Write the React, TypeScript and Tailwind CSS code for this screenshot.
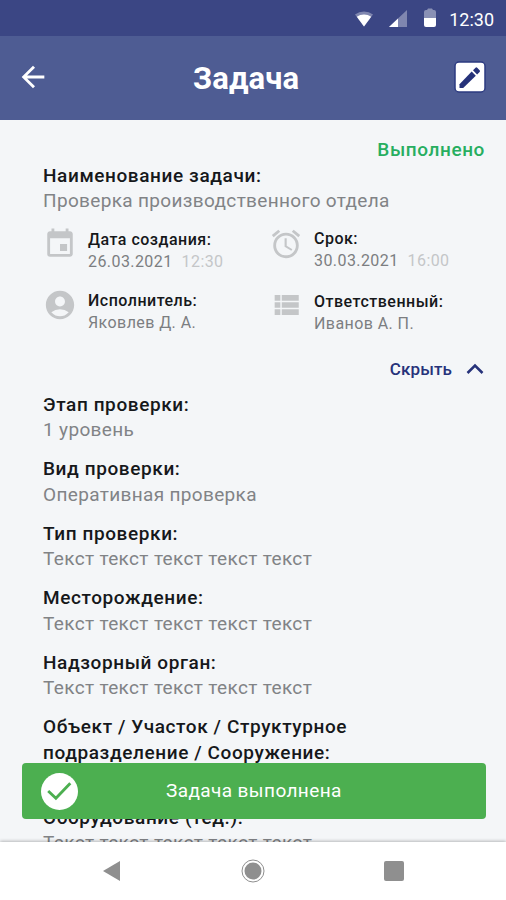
import { MdAccountCircle, MdAlarm, MdArrowBack, MdEvent } from "react-icons/md";

const fields = [
  { label: "Этап проверки:", value: "1 уровень" },
  { label: "Вид проверки:", value: "Оперативная проверка" },
  { label: "Тип проверки:", value: "Текст текст текст текст текст" },
  { label: "Месторождение:", value: "Текст текст текст текст текст" },
  { label: "Надзорный орган:", value: "Текст текст текст текст текст" },
];

function ListIcon() {
  return (
    <svg viewBox="0 0 24 24" className="size-[34px] shrink-0" fill="currentColor">
      <path d="M4 14h4v-4H4v4zm0 5h4v-4H4v4zM4 9h4V5H4v4zm5 5h12v-4H9v4zm0 5h12v-4H9v4zM9 5v4h12V5H9z" />
    </svg>
  );
}

function StatusBar() {
  return (
    <div className="flex h-[36px] shrink-0 items-center justify-end bg-[#3b4684] pr-[12px] text-white">
      <svg viewBox="0 0 20 18" className="mr-[15px] h-[18px] w-[20px]">
        <path d="M10 17.5 1 5.5a15 15 0 0 1 18 0z" fill="#fff" fillOpacity="0.35" />
        <path d="M10 17.5 2.8 7.8a12.5 12.5 0 0 1 14.4 0z" fill="#fff" />
      </svg>
      <svg viewBox="0 0 18 18" className="mr-[16px] h-[18px] w-[18px]">
        <path d="M0 18 18 1v17z" fill="#fff" fillOpacity="0.35" />
        <path d="M0 18 9 9.5V18z" fill="#fff" />
      </svg>
      <svg viewBox="0 0 14 20" className="mr-[12px] h-[20px] w-[14px]">
        <path d="M1 4a2 2 0 0 1 2-2h1l1-1.5h4L10 2h1a2 2 0 0 1 2 2v6H1z" fill="#fff" fillOpacity="0.4" />
        <path d="M1 10h12v7a2 2 0 0 1-2 2H3a2 2 0 0 1-2-2z" fill="#fff" />
      </svg>
      <span className="mt-[3px] text-[18px] leading-5">12:30</span>
    </div>
  );
}

function Header() {
  return (
    <div className="flex h-[84px] shrink-0 items-center bg-[#4e5c93] pl-[16px] pr-[20px] text-white">
      <MdArrowBack className="mb-[3px] size-[34px]" />
      <h1 className="mt-[2px] flex-1 pl-[143px] text-[31px] font-bold leading-9 tracking-[0.1px]">Задача</h1>
      <svg viewBox="0 0 32 32" className="mb-[2px] size-[32px]">
        <rect x="1" y="1" width="30" height="30" rx="4" fill="#fff" stroke="#2b3a80" strokeWidth="1.5" />
        <path d="M5.5 23.3V27h3.7l12.6-12.300-4.100-4.100z" fill="#26327a" />
        <path d="m23.1 13.4 2.5-2.500a1.200 1.200 0 0 0 0-1.700l-2.400-2.400a1.200 1.200 0 0 0-1.700 0L19 9.300z" fill="#26327a" />
      </svg>
    </div>
  );
}

function Field({ label, value }: { label: string; value: string }) {
  return (
    <div className="text-[19px] leading-[25.5px]">
      <div className="font-medium tracking-[0.6px] text-[#16181b]">{label}</div>
      <div className="tracking-[0.34px] text-[#818386]">{value}</div>
    </div>
  );
}

type MetaProps = {
  label: string;
  value: string;
  time?: string;
};

function Meta({ label, value, time }: MetaProps) {
  return (
    <div className="text-[16px] leading-[22.5px]">
      <div className="font-medium tracking-[0.5px] text-[#16181b]">{label}</div>
      <div className="tracking-[0.42px] text-[#7c7e81]">
        {value}
        {time && <span className="ml-[9px] text-[#c4c6c8]">{time}</span>}
      </div>
    </div>
  );
}

export default function App() {
  return (
    <div className="relative flex h-[900px] w-[506px] flex-col overflow-hidden bg-[#f4f6f8] font-['Roboto',sans-serif]">
      <StatusBar />
      <Header />

      <div className="min-h-0 flex-1 overflow-hidden pl-[43px] pr-[21px] pt-[17px]">
        <div className="text-right text-[19px] font-medium leading-[25.5px] tracking-[0.6px] text-[#27ae60]">
          Выполнено
        </div>
        <Field label="Наименование задачи:" value="Проверка производственного отдела" />

        <div className="mt-[13px] flex text-[#c4c6c8]">
          <div className="flex w-[226px] flex-col">
            <div className="flex h-[61px] gap-[11px]">
              <MdEvent className="size-[34px] shrink-0" />
              <div className="pt-[2px]">
                <Meta label="Дата создания:" value="26.03.2021" time="12:30" />
              </div>
            </div>
            <div className="flex gap-[11px]">
              <MdAccountCircle className="size-[34px] shrink-0" />
              <div className="pt-[2px]">
                <Meta label="Исполнитель:" value="Яковлев Д. А." />
              </div>
            </div>
          </div>
          <div className="flex flex-col">
            <div className="flex h-[61px] gap-[11px]">
              <MdAlarm className="size-[34px] shrink-0" />
              <div className="pt-[1px]">
                <Meta label="Срок:" value="30.03.2021" time="16:00" />
              </div>
            </div>
            <div className="flex gap-[11px]">
              <ListIcon />
              <div className="pt-[3px]">
                <Meta label="Ответственный:" value="Иванов А. П." />
              </div>
            </div>
          </div>
        </div>

        <div className="mt-[21px] flex items-center justify-end gap-[14px] text-[17px] font-medium leading-6 tracking-[0.1px] text-[#26327a]">
          Скрыть
          <svg viewBox="0 0 18 12" className="mr-[1px] h-[12px] w-[18px]" fill="none" stroke="currentColor" strokeWidth="2.5">
            <path d="m1.5 10 7.5-7.500 7.500 7.500" />
          </svg>
        </div>

        <div className="mt-[11px] flex flex-col gap-[13.6px]">
          {fields.map((field) => (
            <Field key={field.label} label={field.label} value={field.value} />
          ))}
          <div className="pb-[25.5px] text-[19px] font-medium leading-[25.5px] tracking-[0.6px] text-[#16181b]">
            Объект / Участок / Структурное
            <br />
            подразделение / Сооружение:
          </div>
          <Field label="Оборудование (тед.):" value="Текст текст текст текст текст" />
        </div>
      </div>

      {/* Toast over the list */}
      <div className="absolute left-[22px] top-[763px] flex h-[56px] w-[464px] items-center rounded-[4px] bg-[#4caf50] pl-[19px] text-white">
        <svg viewBox="0 0 36 36" className="size-[37px]">
          <circle cx="18" cy="18" r="18" fill="#fff" />
          <path d="m7 17.5 7.500 7L28.500 10" fill="none" stroke="#4caf50" strokeWidth="2.8" />
        </svg>
        <span className="ml-[88px] text-[19px] tracking-[0.4px]">Задача выполнена</span>
      </div>

      <div className="relative flex h-[58px] shrink-0 items-center justify-between bg-white pl-[102px] pr-[102px] text-[#8f8f8f] shadow-[0_-1px_3px_rgba(0,0,0,0.25)]">
        <svg viewBox="0 0 19 22" className="h-[22px] w-[19px]" fill="currentColor">
          <path d="M1 11 18 1v20z" />
        </svg>
        <svg viewBox="0 0 24 24" className="size-[24px]">
          <circle cx="12" cy="12" r="11" fill="none" stroke="currentColor" />
          <circle cx="12" cy="12" r="8.5" fill="currentColor" />
        </svg>
        <div className="size-[20px] rounded-[2px] bg-[#8f8f8f]" />
      </div>
    </div>
  );
}
